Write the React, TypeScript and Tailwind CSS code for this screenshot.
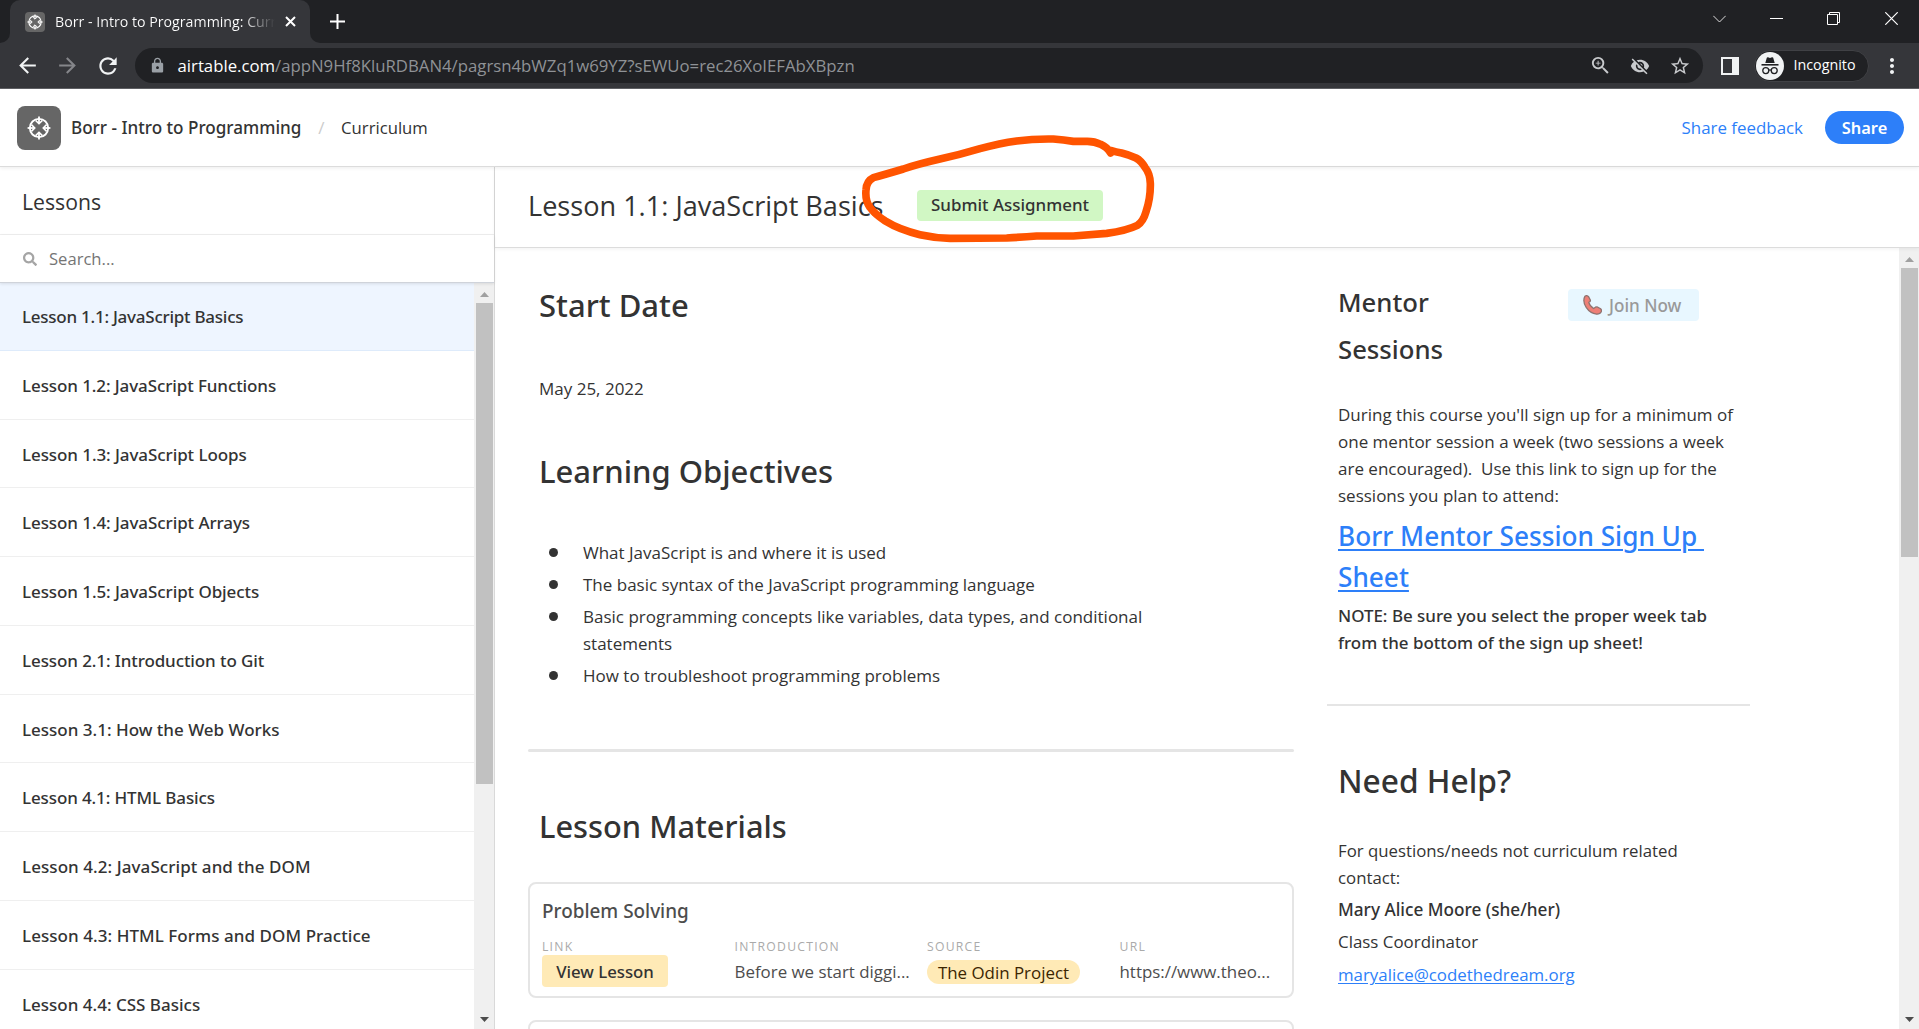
import React from 'react';
import {
  MdArrowBack,
  MdArrowForward,
  MdRefresh,
  MdLock,
  MdZoomIn,
  MdVisibilityOff,
  MdStarBorder,
  MdMoreVert,
} from 'react-icons/md';
import { FaSearch } from 'react-icons/fa';

const lessons = [
  { title: 'Lesson 1.1: JavaScript Basics', tracking: 'tracking-[-0.25px]' },
  { title: 'Lesson 1.2: JavaScript Functions', tracking: 'tracking-[-0.1px]' },
  { title: 'Lesson 1.3: JavaScript Loops', tracking: 'tracking-[-0.08px]' },
  { title: 'Lesson 1.4: JavaScript Arrays', tracking: 'tracking-[-0.08px]' },
  { title: 'Lesson 1.5: JavaScript Objects', tracking: 'tracking-[-0.08px]' },
  { title: 'Lesson 2.1: Introduction to Git', tracking: 'tracking-[-0.1px]' },
  { title: 'Lesson 3.1: How the Web Works', tracking: 'tracking-[0px]' },
  { title: 'Lesson 4.1: HTML Basics', tracking: 'tracking-[-0.12px]' },
  { title: 'Lesson 4.2: JavaScript and the DOM', tracking: 'tracking-[0.07px]' },
  { title: 'Lesson 4.3: HTML Forms and DOM Practice', tracking: 'tracking-[0.06px]' },
  { title: 'Lesson 4.4: CSS Basics', tracking: 'tracking-[0px]' },
];

const objectives = [
  'What JavaScript is and where it is used',
  'The basic syntax of the JavaScript programming language',
  'Basic programming concepts like variables, data types, and conditional statements',
  'How to troubleshoot programming problems',
];

function BaseLogo({ className }: { className: string }) {
  return (
    <svg viewBox="-12 -12 24 24" className={className} fill="none" stroke="#fff" strokeWidth="1.8">
      <circle r="9.2" />
      {[0, 90, 180, 270].map((a) => (
        <g key={a} transform={`rotate(${a})`}>
          <path d="M0 -11.4V-5" />
          <path d="M-3.4 -7.6L0 -4.2L3.4 -7.6" strokeWidth="1.5" />
        </g>
      ))}
    </svg>
  );
}

function TabStrip() {
  return (
    <div className="flex h-[43px] shrink-0 bg-[#202124] text-white">
      <div className="flex w-2.5 items-end bg-[#35363a]">
        <div className="h-full w-full rounded-br-[10px] bg-[#202124]" />
      </div>
      <div className="flex w-[300px] bg-[#202124]">
        <div className="flex w-full items-center rounded-t-[10px] bg-[#35363a] pl-[15px]">
          <div className="flex size-5 items-center justify-center rounded-sm bg-[#666]">
            <BaseLogo className="size-4" />
          </div>
          <div className="ml-[10px] w-[219.5px] overflow-hidden whitespace-nowrap bg-linear-to-r from-white from-85% to-transparent bg-clip-text pb-px text-[14.2px] text-transparent">
            Borr - Intro to Programming: Curri
          </div>
          <svg className="ml-[10px] size-[11px]" viewBox="0 0 11 11" stroke="#fff" strokeWidth="2">
            <path d="M1 1L10 10M10 1L1 10" />
          </svg>
        </div>
      </div>
      <div className="flex flex-1 bg-[#35363a]">
        <div className="flex w-full items-center rounded-bl-[10px] bg-[#202124] pl-5">
          <svg className="size-[15px]" viewBox="0 0 15 15" stroke="#fff" strokeWidth="2">
            <path d="M7.5 0V15M0 7.5H15" />
          </svg>
          <div className="mb-1.5 ml-auto flex items-center pr-[21px]">
            <svg className="h-2 w-[13px]" viewBox="0 0 13 8" fill="none" stroke="#ddd" strokeWidth="1">
              <path d="M0.3 0.8L6.5 7L12.7 0.8" />
            </svg>
            <div className="ml-11 h-px w-[13px] bg-white" />
            <svg className="ml-11 size-[13px]" viewBox="0 0 13 13" fill="none" stroke="#fff" strokeWidth="1">
              <path d="M0.5 2.5H10.5V12.5H0.5ZM2.5 2.5V0.5H12.5V10.5H10.5" />
            </svg>
            <svg className="ml-[45px] size-[13px]" viewBox="0 0 13 13" stroke="#fff" strokeWidth="1.2">
              <path d="M0.3 0.3L12.7 12.7M12.7 0.3L0.3 12.7" />
            </svg>
          </div>
        </div>
      </div>
    </div>
  );
}

function Toolbar() {
  return (
    <div className="flex h-[46px] shrink-0 items-center border-b border-[#606165] bg-[#35363a] pl-[15px] text-[#f1f3f4]">
      <MdArrowBack className="size-[25px]" />
      <MdArrowForward className="ml-[15px] size-[25px] text-[#85868a]" />
      <MdRefresh className="ml-[15px] size-[26px]" />
      <div className="ml-[14px] flex h-[35px] w-[1568px] items-center rounded-full bg-[#202124] pl-3.5 text-[#c8cacd]">
        <MdLock className="size-[17px] text-[#9aa0a6]" />
        <div className="ml-[11.5px] text-[16.75px] leading-6 text-[#8f9296]">
          <span className="text-white">airtable.com</span>/appN9Hf8KluRDBAN4/pagrsn4bWZq1w69YZ?sEWUo=rec26XoIEFAbXBpzn
        </div>
        <div className="mr-3 ml-auto flex items-center">
          <MdZoomIn className="size-[23px]" />
          <MdVisibilityOff className="ml-[18px] size-5" />
          <MdStarBorder className="ml-[19px] size-[22px]" />
        </div>
      </div>
      <div className="ml-[18px] flex size-[18px] justify-end border-[2.5px] border-[#f1f3f4]">
        <div className="w-[5px] bg-[#f1f3f4]" />
      </div>
      <div className="ml-[15px] flex h-8 w-[115px] items-center rounded-full border border-[#404145] bg-[#202124] pl-px">
        <svg className="size-7" viewBox="0 0 28 28">
          <circle cx="14" cy="14" r="14" fill="#f1f3f4" />
          <path d="M9.3 11L10.8 5.8Q11.2 5 12 5.3L14 6L16 5.3Q16.8 5 17.2 5.8L18.7 11Z" fill="#202124" />
          <path d="M5.5 12.8H22.5" stroke="#202124" strokeWidth="1.6" />
          <g fill="none" stroke="#202124" strokeWidth="1.3">
            <circle cx="9.8" cy="18.6" r="3" />
            <circle cx="18.2" cy="18.6" r="3" />
            <path d="M12.8 18.2Q14 17.4 15.2 18.2" />
          </g>
        </svg>
        <span className="ml-[9.5px] pb-0.5 text-[14.3px] text-white">Incognito</span>
      </div>
      <MdMoreVert className="ml-[11px] size-6" />
    </div>
  );
}

function Header() {
  return (
    <header className="z-10 flex h-[78px] shrink-0 items-center border-b border-[#dcdcdc] bg-white pr-[15px] pl-[17px] shadow-[0_1px_4px_rgba(0,0,0,0.08)]">
      <div className="flex size-11 items-center justify-center rounded-lg bg-[#666]">
        <BaseLogo className="size-6" />
      </div>
      <span className="ml-[10px] font-['Noto_Sans',sans-serif] text-[17.1px] font-medium">Borr - Intro to Programming</span>
      <span className="ml-[17px] text-[17px] text-[#ccc]">/</span>
      <span className="ml-[16.5px] text-[16.7px]">Curriculum</span>
      <span className="ml-auto text-[16.9px] text-[#2d7ff9]">Share feedback</span>
      <button className="ml-[22px] h-[33px] w-[79px] rounded-full bg-[#2d7ff9] pb-px font-['Noto_Sans',sans-serif] text-[16.4px] font-semibold text-white">
        Share
      </button>
    </header>
  );
}

function Scrollbar({ thumb }: { thumb: string }) {
  return (
    <div className="flex w-5 shrink-0 flex-col items-center bg-[#f0f0f0]">
      <div className="flex h-5 items-center pt-0.5">
        <svg className="h-[5px] w-[9px]" viewBox="0 0 9 5" fill="#a0a0a0">
          <path d="M4.5 0L9 5H0Z" />
        </svg>
      </div>
      <div className={`w-[17px] bg-[#c1c1c1] ${thumb}`} />
      <svg className="mt-auto mb-[7px] h-[5px] w-[9px]" viewBox="0 0 9 5" fill="#4d4d4d">
        <path d="M4.5 5L9 0H0Z" />
      </svg>
    </div>
  );
}

function Sidebar() {
  return (
    <aside className="flex w-[495px] shrink-0 flex-col border-r border-[#d9d9d9]">
      <div className="flex h-[68px] shrink-0 items-center border-b border-[#efefef] pt-0.5 pl-[22px] text-[21.2px]">
        Lessons
      </div>
      <div className="z-10 flex h-[48px] shrink-0 items-center border-b border-[#cfd3da] pl-[23px] shadow-[0_1px_3px_rgba(0,0,0,0.1)]">
        <FaSearch className="size-[14px] text-[#a5a5a5]" />
        <span className="ml-[12px] text-[16.6px] text-[#757575]">Search...</span>
      </div>
      <div className="flex min-h-0 flex-1">
        <ul className="-mt-px flex-1 overflow-hidden">
          {lessons.map((l, i) => (
            <li
              key={l.title}
              className={`flex h-[68.75px] items-center border-b pt-[1.5px] pl-[22px] font-['Noto_Sans',sans-serif] text-[17px] font-medium ${l.tracking} ${
                i === 0 ? 'border-[#deebfb] bg-[#eef5ff]' : 'border-[#efefef]'
              }`}
            >
              {l.title}
            </li>
          ))}
        </ul>
        <Scrollbar thumb="h-[481px]" />
      </div>
    </aside>
  );
}

function MaterialCard({ children }: { children?: React.ReactNode }) {
  return <div className="h-[116px] shrink-0 rounded-lg border-2 border-[#e5e5e5] pt-[15px] pl-3">{children}</div>;
}

function ProblemSolving() {
  return (
    <MaterialCard>
      <h3 className="font-['Noto_Sans',sans-serif] text-[18.9px] leading-6 font-medium text-[#4d4d4d]">Problem Solving</h3>
      <div className="mt-4 grid grid-cols-[repeat(4,192.5px)] text-[12.2px] leading-[15px] tracking-[1.25px] text-[#aaa] uppercase">
        <span>Link</span>
        <span>Introduction</span>
        <span>Source</span>
        <span>URL</span>
      </div>
      <div className="mt-px grid h-8 grid-cols-[repeat(4,192.5px)] items-center text-[16.9px] whitespace-nowrap text-[#4d4d4d]">
        <button className="h-8 w-[126px] rounded bg-[#ffeab6] font-['Noto_Sans',sans-serif] text-[16.8px] font-medium text-[#333]">
          View Lesson
        </button>
        <span>Before we start diggi...</span>
        <span className="mt-px flex h-6 w-[153px] items-center justify-center rounded-full bg-[#ffeab6] pt-0.5 text-[16.9px] text-[#3b2501]">
          The Odin Project
        </span>
        <span>https://www.theo...</span>
      </div>
    </MaterialCard>
  );
}

function LessonColumn() {
  return (
    <section className="flex w-[765.5px] flex-col">
      <div className="flex flex-col px-[11px]">
        <h2 className="mt-[37px] font-['Noto_Sans',sans-serif] text-[31px] leading-10 font-medium">Start Date</h2>
        <p className="mt-[50px]">May 25, 2022</p>
        <h2 className="mt-[49px] font-['Noto_Sans',sans-serif] text-[31px] leading-10 font-medium">Learning Objectives</h2>
        <ul className="mt-[48px] flex flex-col gap-[5px]">
          {objectives.map((o) => (
            <li key={o} className="flex">
              <span className="mt-[9px] ml-[10px] size-[9px] shrink-0 rounded-full bg-[#333]" />
              <span className="ml-[25px] w-[580px]">{o}</span>
            </li>
          ))}
        </ul>
      </div>
      <div className="mt-[60px] h-[3px] shrink-0 rounded bg-[#e5e5e5]" />
      <h2 className="mt-[54px] ml-[11px] font-['Noto_Sans',sans-serif] text-[30.8px] leading-10 font-medium">Lesson Materials</h2>
      <div className="mt-9 flex flex-col gap-[22px]">
        <ProblemSolving />
        <MaterialCard />
      </div>
    </section>
  );
}

function PhoneIcon() {
  return (
    <svg className="h-[20px] w-[19px]" viewBox="0 0 19 20">
      <path
        d="M2 1.2Q4 -0.2 5.8 2L7.3 5Q7.8 6.6 5.8 7.4Q6.6 10.8 10.6 13.5L12.4 12.2Q13.6 11.6 14.8 12.2L17.6 13.8Q18.9 15 18.2 16.8Q17 19.4 13.6 19.2Q7.2 18.4 3.2 12.4Q-0.8 6 2 1.2Z"
        fill="#ee7f76"
        stroke="#8f7370"
        strokeWidth="1.3"
      />
    </svg>
  );
}

function HelpColumn() {
  return (
    <aside className="ml-[33.5px] flex w-[423px] flex-col">
      <div className="flex pl-[11px]">
        <h3 className="mt-[31px] w-[230px] font-['Noto_Sans',sans-serif] text-[25.7px] leading-[47px] font-medium">
          Mentor
          <br />
          Sessions
        </h3>
        <button className="mt-[41px] flex h-8 w-[131px] items-center rounded bg-[#e8f7ff] pl-[15px] font-['Noto_Sans',sans-serif] text-[17.1px] font-medium text-[#999]">
          <PhoneIcon />
          <span className="ml-[7px]">Join Now</span>
        </button>
      </div>
      <div className="flex flex-col pl-[11px] whitespace-pre">
        <p className="mt-[28px]">
          {"During this course you'll sign up for a minimum of\none mentor session a week (two sessions a week\nare encouraged).  Use this link to sign up for the\nsessions you plan to attend:"}
        </p>
        <p className="mt-[7px] font-['Noto_Sans',sans-serif] text-[26.2px] leading-[41px] font-medium text-[#2d7ff9]">
          <span className="underline decoration-2 underline-offset-[3px]">{'Borr Mentor Session Sign Up \nSheet'}</span>
        </p>
        <p className="mt-[4px] font-['Noto_Sans',sans-serif] text-[16.95px] font-medium">
          {'NOTE: Be sure you select the proper week tab\nfrom the bottom of the sign up sheet!'}
        </p>
      </div>
      <div className="mt-[48px] h-0.5 shrink-0 bg-[#e5e5e5]" />
      <div className="flex flex-col pl-[11px] whitespace-pre">
        <h2 className="mt-[55px] font-['Noto_Sans',sans-serif] text-[31.7px] leading-10 font-medium">Need Help?</h2>
        <p className="mt-[36px] text-[16.8px]">{'For questions/needs not curriculum related\ncontact:'}</p>
        <p className="mt-[5px] font-['Noto_Sans',sans-serif] text-[17.2px] font-medium">Mary Alice Moore (she/her)</p>
        <p className="mt-[5px] text-[16.9px]">Class Coordinator</p>
        <p className="mt-[6px] text-[16.85px] text-[#2d7ff9] underline underline-offset-2">maryalice@codethedream.org</p>
      </div>
    </aside>
  );
}

function HandDrawnCircle() {
  return (
    <svg
      className="pointer-events-none absolute top-[130px] left-[860px] z-20 h-[120px] w-[300px] overflow-visible"
      viewBox="0 0 900 360"
      fill="none"
      stroke="#ff5400"
      strokeWidth="23"
      strokeLinejoin="round"
      strokeLinecap="round"
    >
      <path d="M752 69Q742 52 722 43Q704 34 682 34H640Q612 30 580 27Q520 26 470 33Q420 40 360 56Q300 74 240 87Q170 103 130 117Q80 132 40 143Q19 153 18 180Q15 212 30 232Q44 252 76 273Q118 299 180 314Q225 324 270 325L440 324Q490 321 530 318H640L740 310Q800 302 832 286Q850 274 858 245Q872 205 871 160Q870 130 855 112Q843 92 828 84Q806 74 785 69Q768 66 752 61" />
    </svg>
  );
}

export default function App() {
  return (
    <div className="relative flex h-[1029px] w-[1919px] flex-col overflow-hidden bg-white font-['Open_Sans','Noto_Sans',sans-serif] text-[17px] leading-[27px] text-[#333]">
      <TabStrip />
      <Toolbar />
      <Header />
      <div className="flex min-h-0 flex-1">
        <Sidebar />
        <main className="flex min-w-0 flex-1 flex-col">
          <div className="z-10 flex h-[81px] shrink-0 items-center border-b border-[#dcdcdc] pb-[3px] pl-[33px] shadow-[0_1px_4px_rgba(0,0,0,0.06)]">
            <h1 className="w-[389px] text-[27.1px] leading-10">Lesson 1.1: JavaScript Basics</h1>
            <button className="-mt-px h-[31px] w-[186px] rounded bg-[#d1f7c4] pb-px font-['Noto_Sans',sans-serif] text-[16.95px] font-medium">
              Submit Assignment
            </button>
          </div>
          <div className="flex min-h-0 flex-1">
            <div className="flex min-w-0 flex-1 overflow-hidden pl-[33px]">
              <LessonColumn />
              <HelpColumn />
            </div>
            <Scrollbar thumb="h-[289px]" />
          </div>
        </main>
      </div>
      <HandDrawnCircle />
    </div>
  );
}
